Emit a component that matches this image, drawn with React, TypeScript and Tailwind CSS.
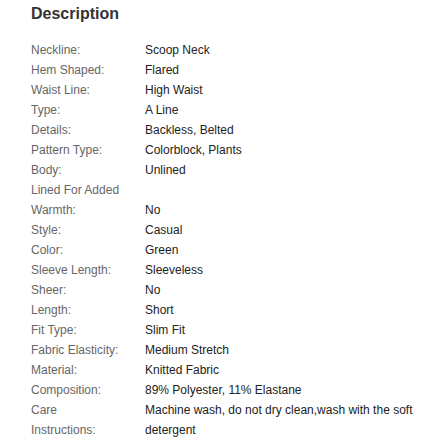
import React from "react";

const rows: [string, string][] = [
  ["Neckline:", "Scoop Neck"],
  ["Hem Shaped:", "Flared"],
  ["Waist Line:", "High Waist"],
  ["Type:", "A Line"],
  ["Details:", "Backless, Belted"],
  ["Pattern Type:", "Colorblock, Plants"],
  ["Body:", "Unlined"],
  ["Lined For Added Warmth:", "No"],
  ["Style:", "Casual"],
  ["Color:", "Green"],
  ["Sleeve Length:", "Sleeveless"],
  ["Sheer:", "No"],
  ["Length:", "Short"],
  ["Fit Type:", "Slim Fit"],
  ["Fabric Elasticity:", "Medium Stretch"],
  ["Material:", "Knitted Fabric"],
  ["Composition:", "89% Polyester, 11% Elastane"],
  ["Care Instructions:", "Machine wash, do not dry clean,wash with the soft detergent"],
];

export default function App() {
  return (
    <div
      className="w-[422px] h-[439px] overflow-hidden bg-white px-[31px] pt-[2px]"
      style={{ fontFamily: '"Liberation Sans", Arial, sans-serif' }}
    >
      <h2 className="text-[16px] leading-[24px] font-bold text-[#333333]">Description</h2>
      <div className="mt-[14px] flex flex-col">
        {rows.map(([k, v]) => (
          <div key={k} className="flex items-end text-[12px] leading-[20px]">
            <div className="w-[114px] shrink-0 pr-[24px] text-[#666666]">{k}</div>
            <div className="w-[275px] shrink-0 text-[#222222]">{v}</div>
          </div>
        ))}
      </div>
    </div>
  );
}
